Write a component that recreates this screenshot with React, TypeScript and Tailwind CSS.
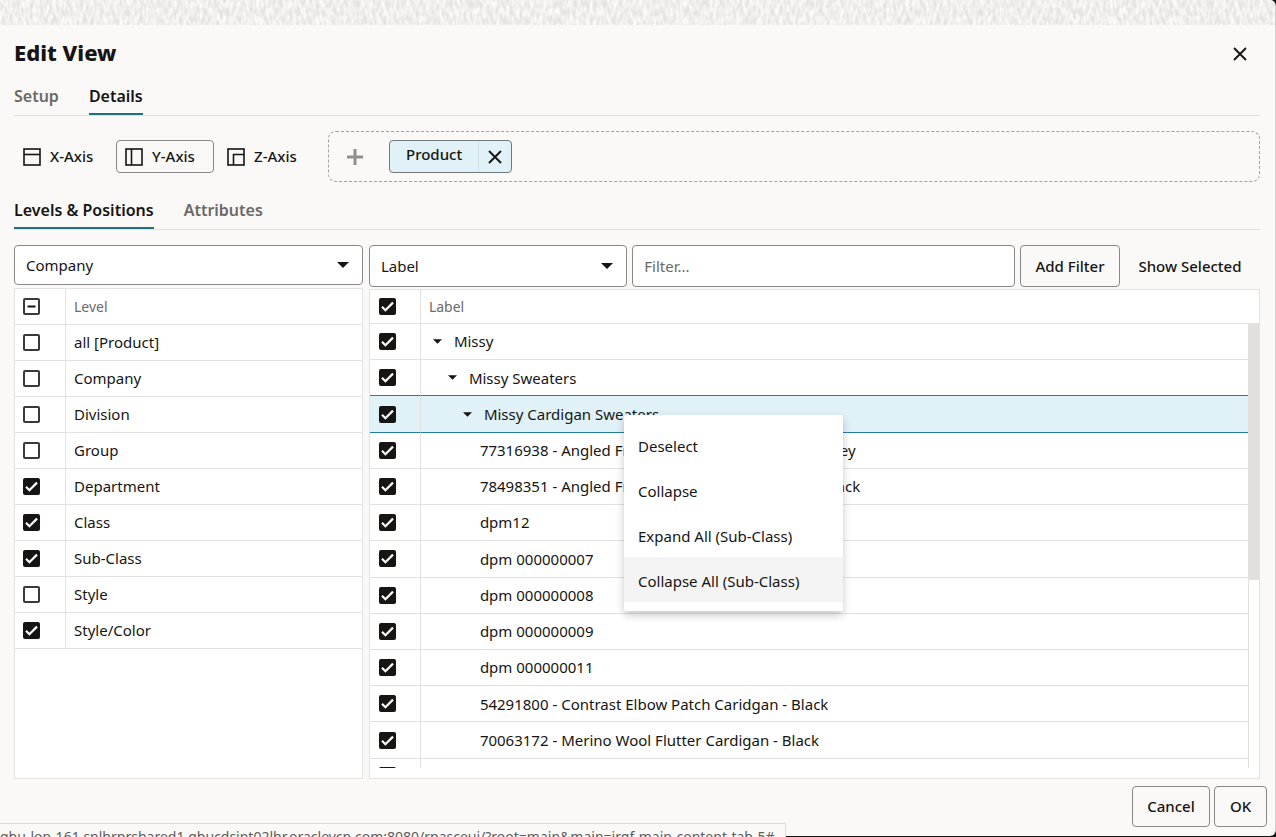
import React, { useState } from "react";
import clsx from "clsx";

const levels = [
  { name: "all [Product]", checked: false },
  { name: "Company", checked: false },
  { name: "Division", checked: false },
  { name: "Group", checked: false },
  { name: "Department", checked: true },
  { name: "Class", checked: true },
  { name: "Sub-Class", checked: true },
  { name: "Style", checked: false },
  { name: "Style/Color", checked: true },
];

const positions = [
  { name: "Missy", depth: 0 },
  { name: "Missy Sweaters", depth: 1 },
  { name: "Missy Cardigan Sweaters", depth: 2 },
  { name: "77316938 - Angled Front Pocket Long Cardigan - Grey", depth: 3 },
  { name: "78498351 - Angled Front Pocket Long Cardigan - Black", depth: 3 },
  { name: "dpm12", depth: 3 },
  { name: "dpm 000000007", depth: 3 },
  { name: "dpm 000000008", depth: 3 },
  { name: "dpm 000000009", depth: 3 },
  { name: "dpm 000000011", depth: 3 },
  { name: "54291800 - Contrast Elbow Patch Caridgan - Black", depth: 3 },
  { name: "70063172 - Merino Wool Flutter Cardigan - Black", depth: 3 },
];

const indents = ["pl-3", "pl-[27px]", "pl-[42px]", "pl-[59px]"];
const selectedIndex = 2;

const menuItems = [
  "Deselect",
  "Collapse",
  "Expand All (Sub-Class)",
  "Collapse All (Sub-Class)",
];

function Texture() {
  return (
    <svg className="block h-[25px] w-full shrink-0" aria-hidden="true">
      <filter id="grain" x="0" y="0" width="100%" height="100%">
        <feTurbulence
          type="fractalNoise"
          baseFrequency="0.3 0.12"
          numOctaves="2"
          seed="7"
        />
        <feColorMatrix values="0 0 0 0 0.965  0 0 0 0 0.96  0 0 0 0 0.953  2.2 0 0 0 -0.6" />
      </filter>
      <rect width="100%" height="100%" fill="#e4e3e1" />
      <rect width="100%" height="100%" filter="url(#grain)" />
    </svg>
  );
}

function Cross({ className }: { className?: string }) {
  return (
    <svg viewBox="0 0 14 14" className={clsx("size-[14px]", className)}>
      <path d="M1 1l12 12M13 1L1 13" stroke="#161513" strokeWidth="1.9" fill="none" />
    </svg>
  );
}

function Caret({ className }: { className?: string }) {
  return (
    <svg viewBox="0 0 12 6" className={className}>
      <path d="M0 0h12L6 6z" fill="#161513" />
    </svg>
  );
}

function AxisIcon({ axis }: { axis: string }) {
  return (
    <svg viewBox="0 0 18 18" className="size-[18px]" fill="none" stroke="#161513" strokeWidth="1.6">
      <rect x="1" y="1" width="16" height="16" />
      {axis === "X" && <path d="M1 6.5h16" />}
      {axis === "Y" && <path d="M6.5 1v16" />}
      {axis === "Z" && <path d="M6.5 17V6.5H17" />}
    </svg>
  );
}

interface CheckProps {
  label: string;
  initial?: boolean;
  mixed?: boolean;
}

function Check({ label, initial = false, mixed = false }: CheckProps) {
  const [checked, setChecked] = useState(initial);

  return (
    <label className="grid size-[17px] place-items-center">
      <input
        type="checkbox"
        aria-label={label}
        checked={checked}
        onChange={(e) => setChecked(e.target.checked)}
        className="col-start-1 row-start-1 size-[17px] appearance-none rounded-xs border-2 border-[#3a3937] bg-white checked:border-[#161513] checked:bg-[#161513]"
      />
      {(checked || mixed) && (
        <svg viewBox="0 0 17 17" className="pointer-events-none col-start-1 row-start-1 size-[17px]" fill="none">
          {checked ? (
            <path d="M3 8.8l3.4 3.4L14 4.6" stroke="#fff" strokeWidth="2.2" />
          ) : (
            <path d="M4.5 8.5h8" stroke="#161513" strokeWidth="2" />
          )}
        </svg>
      )}
    </label>
  );
}

interface PickerProps {
  label: string;
  value: string;
  className: string;
}

function Picker({ label, value, className }: PickerProps) {
  return (
    <div className={clsx("grid items-center", className)}>
      <select
        aria-label={label}
        className="col-start-1 row-start-1 h-full w-full appearance-none rounded-sm border border-[#8a8886] bg-white px-[11px] text-[15px]"
      >
        <option>{value}</option>
      </select>
      <Caret className="pointer-events-none col-start-1 row-start-1 mr-[14px] h-[6px] w-3 justify-self-end" />
    </div>
  );
}

interface TabsProps {
  items: string[];
  active: string;
}

function Tabs({ items, active }: TabsProps) {
  return (
    <div role="tablist" className="flex gap-[30px] border-b border-[#e0dfde]">
      {items.map((item) => (
        <button
          key={item}
          role="tab"
          aria-selected={item === active}
          className={clsx(
            "border-b-2 pb-[5px] text-base leading-6 font-semibold",
            item === active
              ? "border-[#227080] text-[#161513]"
              : "border-transparent text-[#6b6967]"
          )}
        >
          {item}
        </button>
      ))}
    </div>
  );
}

function LevelTable() {
  return (
    <div className="mt-[3px] min-h-0 flex-1 overflow-hidden border border-[#e3e2e1] bg-white">
      <table className="w-full border-separate border-spacing-0">
        <thead>
          <tr className="h-9">
            <th className="w-[51px] border-r border-b border-[#e3e2e1] pl-2">
              <Check label="All levels" mixed />
            </th>
            <th className="border-b border-[#e3e2e1] pl-2 text-left text-sm font-normal text-[#6b6967]">
              Level
            </th>
          </tr>
        </thead>
        <tbody>
          {levels.map((level) => (
            <tr key={level.name} className="h-9">
              <td className="border-r border-b border-[#e3e2e1] pl-2">
                <Check label={level.name} initial={level.checked} />
              </td>
              <td className="border-b border-[#e3e2e1] pl-2">{level.name}</td>
            </tr>
          ))}
        </tbody>
      </table>
    </div>
  );
}

function PositionTable() {
  return (
    <div className="mt-[2px] flex min-h-0 flex-1 flex-col border border-[#e3e2e1] bg-white pb-[10px]">
      <div className="min-h-0 flex-1 overflow-hidden">
        <table className="h-[505px] w-full border-separate border-spacing-0">
          <thead>
            <tr className="h-[34px]">
              <th className="w-[51px] border-r border-b border-[#e3e2e1] pl-[9px]">
                <Check label="All positions" initial />
              </th>
              <th className="border-b border-[#e3e2e1] pl-2 text-left text-sm font-normal text-[#6b6967]">
                Label
              </th>
              <th className="w-[11px] border-b border-[#e3e2e1]" />
            </tr>
          </thead>
          <tbody>
            {positions.map((position, index) => {
              const cell = clsx(
                "border-b",
                index === selectedIndex && "bg-[#e0f1f7]",
                index === selectedIndex || index === selectedIndex - 1
                  ? "border-b-[#227e9e]"
                  : "border-b-[#e3e2e1]"
              );
              return (
                <tr key={position.name} className="h-9">
                  <td className={clsx(cell, "border-r border-r-[#e3e2e1] pl-[9px]")}>
                    <Check label={position.name} initial />
                  </td>
                  <td className={clsx(cell, indents[position.depth])}>
                    <div className="flex items-center gap-3">
                      {position.depth < 3 && (
                        <button aria-label={`Collapse ${position.name}`}>
                          <Caret className="h-[5px] w-[9px]" />
                        </button>
                      )}
                      {position.name}
                    </div>
                  </td>
                  {index === 0 && (
                    <td rowSpan={13} className="border-l border-[#e3e2e1] align-top">
                      <div className="h-64 bg-[#e0e0e0]" />
                    </td>
                  )}
                </tr>
              );
            })}
            <tr className="h-9">
              <td className="border-r border-[#e3e2e1] pt-2 pl-[9px] align-top">
                <Check label="Next position" initial />
              </td>
              <td />
            </tr>
          </tbody>
        </table>
      </div>
    </div>
  );
}

function ContextMenu() {
  return (
    <div
      role="menu"
      className="absolute top-[415px] left-[624px] w-[219px] rounded-xs bg-white pt-[7px] pb-[9px] shadow-[0_4px_8px_rgba(0,0,0,0.22)]"
    >
      {menuItems.map((item, index) => (
        <button
          key={item}
          role="menuitem"
          className={clsx(
            "block h-[45px] w-full px-[14px] pt-[3px] text-left",
            index === 3 && "bg-[#f4f4f4]"
          )}
        >
          {item}
        </button>
      ))}
    </div>
  );
}

function App() {
  const [filter, setFilter] = useState("");

  return (
    <div className="relative h-screen overflow-hidden bg-[#161513] pb-px font-['Noto_Sans',sans-serif] text-[15px] text-[#161513]">
      <div className="flex h-full flex-col overflow-hidden rounded-r-md border-r border-[#d5d3d1] bg-[#fbf9f8]">
        <Texture />
        <header className="flex items-center justify-between pt-[11px] pr-7 pl-[14px]">
          <h1 className="text-[22px] leading-8 font-extrabold">Edit View</h1>
          <button aria-label="Close" className="pt-1">
            <Cross />
          </button>
        </header>

        <main className="flex min-h-0 flex-1 flex-col pr-[15px] pl-[14px]">
          <div className="pt-4">
            <Tabs items={["Setup", "Details"]} active="Details" />
          </div>

          <div className="mt-[15px] flex items-center">
            <div className="flex gap-1 font-medium">
              {["X", "Y", "Z"].map((axis) => (
                <button
                  key={axis}
                  className={clsx(
                    "flex h-[33px] w-[98px] items-center gap-[9px] rounded-sm border px-2",
                    axis === "Y" ? "border-[#8a8886]" : "border-transparent"
                  )}
                >
                  <AxisIcon axis={axis} />
                  {axis}-Axis
                </button>
              ))}
            </div>
            <div className="ml-3 flex h-[51px] flex-1 items-center rounded-lg border border-dashed border-[#a3a19f] px-[18px]">
              <button aria-label="Add dimension">
                <svg viewBox="0 0 16 16" className="size-4">
                  <path d="M8 0v16M0 8h16" stroke="#8f8f8f" strokeWidth="3" />
                </svg>
              </button>
              <div className="ml-[26px] flex h-[33px] items-stretch rounded-sm border border-[#72797d] bg-[#e0f1f7] font-medium">
                <span className="flex items-center border-r border-[#d3dfe4] px-4 pb-1">
                  Product
                </span>
                <button aria-label="Remove Product" className="px-[9px]">
                  <Cross />
                </button>
              </div>
            </div>
          </div>

          <div className="pt-4">
            <Tabs items={["Levels & Positions", "Attributes"]} active="Levels & Positions" />
          </div>

          <div className="mt-[15px] flex min-h-0 flex-1 gap-[6px]">
            <section className="flex w-[28%] flex-col">
              <Picker label="Level" value="Company" className="h-10" />
              <LevelTable />
            </section>
            <section className="flex flex-1 flex-col">
              <div className="flex h-[42px] gap-[5px]">
                <Picker label="Search by" value="Label" className="w-[29%]" />
                <input
                  type="text"
                  aria-label="Filter"
                  placeholder="Filter..."
                  value={filter}
                  onChange={(e) => setFilter(e.target.value)}
                  className="min-w-0 flex-1 rounded-sm border border-[#8a8886] bg-white px-[11px] placeholder:text-[#6b6967]"
                />
                <button className="w-[100px] rounded-sm border border-[#8a8886] font-medium">
                  Add Filter
                </button>
                <button className="w-[135px] pr-[18px] pl-[13px] font-medium whitespace-nowrap">
                  Show Selected
                </button>
              </div>
              <PositionTable />
            </section>
          </div>
        </main>

        <footer className="flex justify-end gap-1 px-2 pt-[7px] pb-[9px] font-medium">
          <button className="h-[41px] w-[78px] rounded-sm border border-[#8a8886]">Cancel</button>
          <button className="h-[41px] w-[53px] rounded-sm border border-[#8a8886]">OK</button>
        </footer>
      </div>

      <ContextMenu />

      <div className="absolute bottom-0 left-0 h-[14px] overflow-hidden border-t border-r border-[#dddcdb] bg-[#faf9f8] pt-px pr-[10px] text-sm leading-6 whitespace-nowrap text-[#5f5e5d]">
        gbu-lon-161.snlhrprshared1.gbucdsint02lhr.oraclevcn.com:8080/rpasceui/?root=main&amp;main=irgf-main-content-tab-5#
      </div>
    </div>
  );
}

export default App;
